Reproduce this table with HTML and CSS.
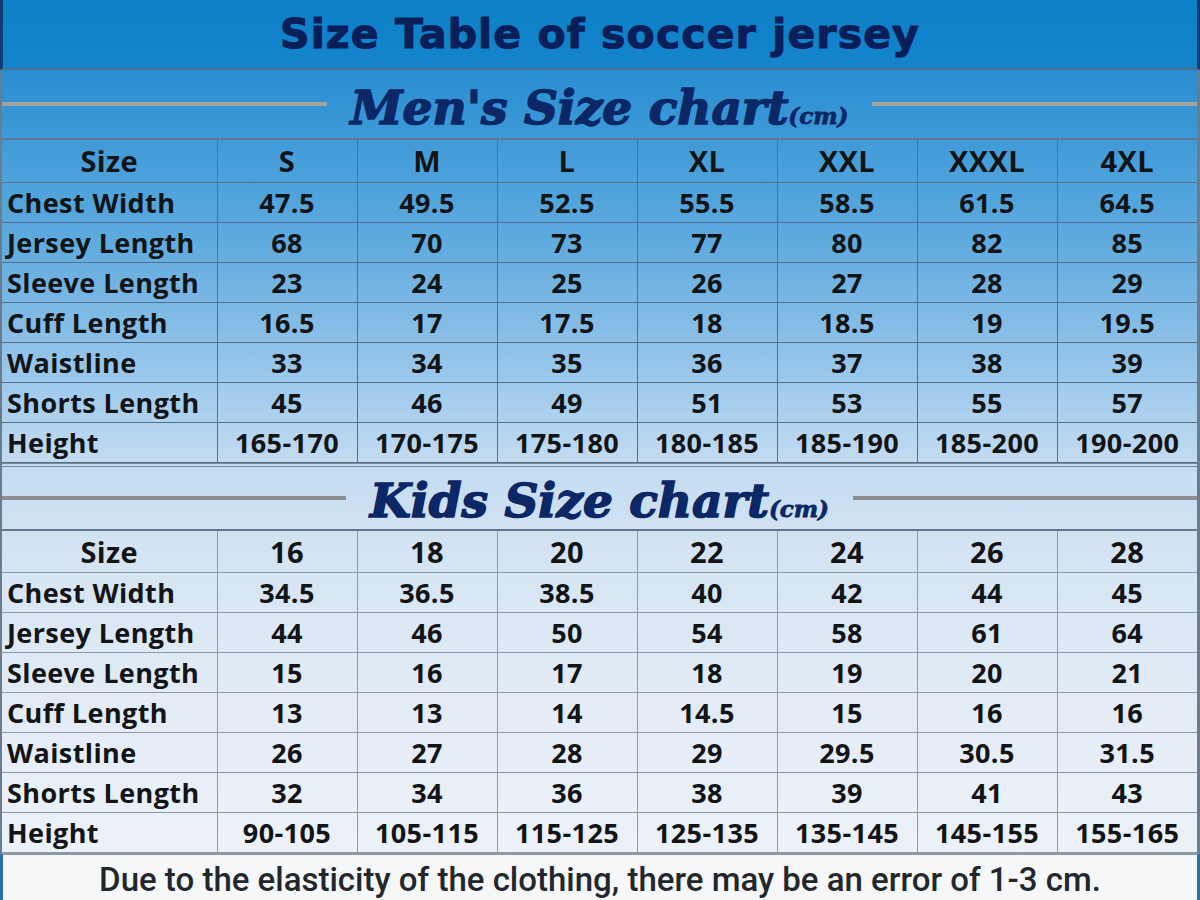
FILE: index.html
```html
<!DOCTYPE html>
<html>
<head>
<meta charset="utf-8">
<title>Size Table of soccer jersey</title>
<link rel="stylesheet" href="styles.css">
</head>
<body>
<div class="page">
  <header class="title-band">
    <h1 class="main-title">Size Table of soccer jersey</h1>
  </header>

  <section class="chart chart-men">
    <div class="chart-head">
      <span class="rule rule-left"></span>
      <h2 class="chart-title">Men's Size chart<small>(cm)</small></h2>
      <span class="rule rule-right"></span>
    </div>
    <table class="size-table">
      <colgroup><col class="c-label"><col><col><col><col><col><col><col></colgroup>
      <tr class="head-row"><th class="label center">Size</th><td>S</td><td>M</td><td>L</td><td>XL</td><td>XXL</td><td>XXXL</td><td>4XL</td></tr>
      <tr><th class="label">Chest Width</th><td>47.5</td><td>49.5</td><td>52.5</td><td>55.5</td><td>58.5</td><td>61.5</td><td>64.5</td></tr>
      <tr><th class="label">Jersey Length</th><td>68</td><td>70</td><td>73</td><td>77</td><td>80</td><td>82</td><td>85</td></tr>
      <tr><th class="label">Sleeve Length</th><td>23</td><td>24</td><td>25</td><td>26</td><td>27</td><td>28</td><td>29</td></tr>
      <tr><th class="label">Cuff Length</th><td>16.5</td><td>17</td><td>17.5</td><td>18</td><td>18.5</td><td>19</td><td>19.5</td></tr>
      <tr><th class="label">Waistline</th><td>33</td><td>34</td><td>35</td><td>36</td><td>37</td><td>38</td><td>39</td></tr>
      <tr><th class="label">Shorts Length</th><td>45</td><td>46</td><td>49</td><td>51</td><td>53</td><td>55</td><td>57</td></tr>
      <tr><th class="label">Height</th><td>165-170</td><td>170-175</td><td>175-180</td><td>180-185</td><td>185-190</td><td>185-200</td><td>190-200</td></tr>
    </table>
  </section>

  <section class="chart chart-kids">
    <div class="chart-head">
      <span class="rule rule-left"></span>
      <h2 class="chart-title">Kids Size chart<small>(cm)</small></h2>
      <span class="rule rule-right"></span>
    </div>
    <table class="size-table">
      <colgroup><col class="c-label"><col><col><col><col><col><col><col></colgroup>
      <tr class="head-row"><th class="label center">Size</th><td>16</td><td>18</td><td>20</td><td>22</td><td>24</td><td>26</td><td>28</td></tr>
      <tr><th class="label">Chest Width</th><td>34.5</td><td>36.5</td><td>38.5</td><td>40</td><td>42</td><td>44</td><td>45</td></tr>
      <tr><th class="label">Jersey Length</th><td>44</td><td>46</td><td>50</td><td>54</td><td>58</td><td>61</td><td>64</td></tr>
      <tr><th class="label">Sleeve Length</th><td>15</td><td>16</td><td>17</td><td>18</td><td>19</td><td>20</td><td>21</td></tr>
      <tr><th class="label">Cuff Length</th><td>13</td><td>13</td><td>14</td><td>14.5</td><td>15</td><td>16</td><td>16</td></tr>
      <tr><th class="label">Waistline</th><td>26</td><td>27</td><td>28</td><td>29</td><td>29.5</td><td>30.5</td><td>31.5</td></tr>
      <tr><th class="label">Shorts Length</th><td>32</td><td>34</td><td>36</td><td>38</td><td>39</td><td>41</td><td>43</td></tr>
      <tr><th class="label">Height</th><td>90-105</td><td>105-115</td><td>115-125</td><td>125-135</td><td>135-145</td><td>145-155</td><td>155-165</td></tr>
    </table>
  </section>

  <footer class="note">
    <p>Due to the elasticity of the clothing, there may be an error of 1-3 cm.</p>
  </footer>
</div>
</body>
</html>
```

FILE: styles.css
```css
* { box-sizing: border-box; margin: 0; padding: 0; }

html, body { width: 1200px; height: 900px; overflow: hidden; }

body { margin: 0; background: #ffffff; }

.page {
  width: 1200px;
  height: 900px;
  display: flex;
  flex-direction: column;
  background: linear-gradient(180deg,
    #0f80c7 0px,
    #2b8fd2 80px,
    #469ed9 160px,
    #5eaade 240px,
    #82bbe6 320px,
    #a5cded 400px,
    #c2dbf1 460px,
    #d3e3f3 540px,
    #dee9f5 650px,
    #e7eef7 760px,
    #edf2f8 855px);
}

/* ---------- title band ---------- */
.title-band {
  height: 70px;
  flex: none;
  display: flex;
  align-items: center;
  justify-content: center;
  background: linear-gradient(180deg, #0c80c8 0%, #1584cb 100%);
  border-bottom: 2px solid #4f6f8d;
  border-left: 3px solid #0d3d73;
  border-right: 3px solid #0d3d73;
}

.main-title {
  font-family: "DejaVu Sans", "Liberation Sans", sans-serif;
  font-weight: bold;
  font-size: 41px;
  letter-spacing: 1.1px;
  color: #0a1e5a;
  line-height: 1;
  padding-top: 1px;
  -webkit-text-stroke: 1.1px #0a1e5a;
}

/* ---------- chart sections ---------- */
.chart {
  flex: none;
  border-left: 2px solid #6a7d90;
  border-right: 3px solid #6a7d90;
}

.chart-head {
  display: flex;
  align-items: center;
  gap: 24px;
  border-bottom: 2px solid #5f7890;
}

.chart-men .chart-head { height: 70px; }
.chart-kids .chart-head { height: 68px; border-top: 4px double #7c8a96; }

.rule {
  flex: 1;
  height: 4px;
  background: #a3a39c;
}

.chart-kids .rule { background: #8c8f92; }

.chart-title {
  font-family: "DejaVu Serif", "Liberation Serif", serif;
  font-style: italic;
  font-weight: bold;
  font-size: 47px;
  color: #0b2766;
  line-height: 1;
  letter-spacing: 0;
  white-space: nowrap;
  -webkit-text-stroke: 1.6px #0b2766;
}

.chart-men .chart-title { margin-top: 6px; }
.chart-kids .chart-title { margin-top: 6px; }

.chart-title small {
  font-size: 23px;
  letter-spacing: 0;
  -webkit-text-stroke: 0.8px #0b2766;
}

/* ---------- table ---------- */
.size-table {
  width: 1195px;
  border-collapse: collapse;
  table-layout: fixed;
  font-family: "Open Sans", "Noto Sans", sans-serif;
  font-weight: 700;
  font-size: 27px;
  letter-spacing: 0.4px;
  color: #121416;
}

.size-table col { width: 140px; }
.size-table col.c-label { width: 215px; }

.size-table th,
.size-table td {
  height: 40px;
  padding: 0;
  text-align: center;
  vertical-align: middle;
  line-height: 1;
  border: 1px solid #55708a;
  white-space: nowrap;
}

.size-table tr:first-child th,
.size-table tr:first-child td { border-top: none; }
.size-table th:first-child { border-left: none; }
.size-table td:last-child { border-right: none; }

.chart-kids .size-table th,
.chart-kids .size-table td { border-color: #8d9aa6; }

.size-table .head-row th,
.size-table .head-row td {
  height: 42px;
  font-size: 29px;
}

.size-table th.label {
  text-align: left;
  padding-left: 5px;
}

.size-table th.label.center {
  text-align: center;
  padding-left: 0;
}

/* ---------- footer note ---------- */
.note {
  flex: 1;
  display: flex;
  align-items: center;
  justify-content: center;
  background: #f6f7f9;
  border-top: 2px solid #8b98a5;
  border-left: 3px solid #2a6fb0;
  border-right: 3px solid #2a6fb0;
}

.note p {
  font-family: Roboto, "Open Sans", sans-serif;
  font-weight: 500;
  font-size: 33px;
  color: #23272b;
  line-height: 1;
  padding-top: 3px;
}
```
